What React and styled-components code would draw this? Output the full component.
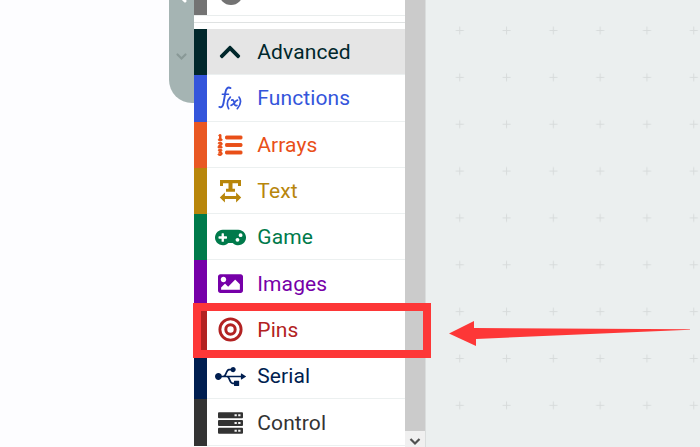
import React from 'react';
import styled, { createGlobalStyle } from 'styled-components';
import { FaChevronUp, FaListOl, FaGamepad, FaImage, FaUsb } from 'react-icons/fa';

const GlobalStyle = createGlobalStyle`
  html, body { margin: 0; overflow: hidden; }
  body { font-family: Roboto, sans-serif; }
`;

const Page = styled.main`
  position: relative;
  display: flex;
  width: 700px;
  height: 447px;
  overflow: hidden;
  background: #fdfdff;
`;

const Simulator = styled.aside`
  display: flex;
  justify-content: flex-end;
  flex: 0 0 193.5px;
`;

const CollapseTab = styled.div`
  display: flex;
  flex-direction: column;
  align-items: center;
  box-sizing: border-box;
  width: 25px;
  height: 103px;
  border-radius: 0 0 0 23px;
  background: #a5b4b3;
`;

const TabArrows = styled.svg`
  width: 25px;
  height: 66px;
`;

const Toolbox = styled.nav`
  display: flex;
  flex-direction: column;
  flex: 0 0 211.5px;
  background: #fff;
`;

const PreviousRow = styled.div`
  display: flex;
  box-sizing: border-box;
  height: 16px;
  border-bottom: 1px solid #e9eded;
`;

const PreviousSpine = styled.div`
  width: 13.5px;
  background: #737373;
`;

const PreviousIcon = styled.svg`
  width: 24px;
  height: 6px;
  margin-left: 11.5px;
`;

const Divider = styled.div`
  box-sizing: border-box;
  height: 13px;
  padding-top: 6px;
  &::before {
    content: '';
    display: block;
    height: 1px;
    background: #dfe2e2;
  }
`;

const Category = styled.div`
  display: flex;
  align-items: center;
  box-sizing: border-box;
  flex: 0 0 46.3px;
  padding-left: 8px;
  border-left: 13.5px solid ${({ $spine, $color }) => $spine || $color};
  color: ${({ $color }) => $color};
  background: ${({ $active }) => ($active ? '#e5e5e5' : '#fff')};
  box-shadow: inset 0 -1px #ecf0f0;
`;

const IconSlot = styled.span`
  display: flex;
  align-items: center;
  justify-content: center;
  width: 31px;
  height: 32px;
  margin-right: 11.8px;
`;

const Label = styled.span`
  font-size: 21px;
  line-height: 30px;
  letter-spacing: 0.1px;
`;

const BoldListIcon = styled(FaListOl)`
  overflow: visible;
  stroke: currentColor;
  stroke-width: 20px;
`;

const Scrollbar = styled.div`
  display: flex;
  align-items: flex-end;
  box-sizing: border-box;
  flex: 0 0 21px;
  border-right: 1px solid #dadddd;
  background: #cbcbcb;
`;

const ScrollButton = styled.div`
  display: flex;
  width: 20px;
  height: 16px;
  background: #f0f0f0;
`;

const Workspace = styled.svg`
  flex: 1;
  height: 447px;
  background: #ebefef;
`;

const Highlight = styled.div`
  position: absolute;
  left: 193px;
  top: 303px;
  box-sizing: border-box;
  width: 237.5px;
  height: 55px;
  border: 8px solid #fd3737;
`;

const Pointer = styled.svg`
  position: absolute;
  left: 446px;
  top: 318px;
`;

function FunctionIcon() {
  return (
    <svg width="26" height="28" viewBox="0 0 26 28" fill="none" stroke="currentColor" strokeLinecap="round">
      <path d="M13.500 4.100c-2.700-1.500-4.400.4-5 3.800L6.400 19.500c-.6 3.300-2.100 4.200-4.100 3.400" strokeWidth="1.900" />
      <path d="M5.300 10.300h6.200" strokeWidth="1.500" />
      <path d="M13.300 13.100c-3.300 3.400-3.600 7.800-1.700 11.600M22 13.100c2.600 3.600 1.400 8-1.700 11.600" strokeWidth="1.700" />
      <path d="M14.700 16.100c1.800-.8 2.200 1.100 2.600 3.200s1 2.900 2.600 2.100M20.500 16.200c-2.400.3-3.600 4.700-6.400 5.200" strokeWidth="1.700" />
    </svg>
  );
}

function TextWidthIcon() {
  return (
    <svg width="23" height="24" viewBox="0 0 23 24" fill="currentColor">
      <path d="M1 1h21v6h-3V4.200h-5.500v5.600H16v3H7v-3h2.500V4.200H4V7H1z" />
      <path d="m.8 18.500 5.100-4.900v3.300h11.200v-3.300l5.100 4.900-5.100 4.900v-3.300H5.900v3.300z" />
    </svg>
  );
}

function TargetIcon() {
  return (
    <svg width="25" height="25" viewBox="0 0 25 25" fill="none" stroke="currentColor">
      <circle cx="12.500" cy="12.500" r="10.600" strokeWidth="2.900" />
      <circle cx="12.500" cy="12.500" r="4.700" strokeWidth="3" />
    </svg>
  );
}

function ServerIcon() {
  return (
    <svg width="25" height="22" viewBox="0 0 25 22">
      <g fill="currentColor">
        <rect y="0.300" width="25" height="6" rx="1" />
        <rect y="8" width="25" height="6" rx="1" />
        <rect y="15.700" width="25" height="6" rx="1" />
      </g>
      <path d="M16.500 3.300h2.300m1.400 0h2.300M16.500 11h2.300m1.400 0h2.300M16.500 18.700h2.300m1.400 0h2.300" stroke="#f4f4f4" strokeWidth="1.900" />
    </svg>
  );
}

const categories = [
  { name: 'Advanced', color: '#00272b', icon: <FaChevronUp size={24} />, active: true },
  { name: 'Functions', color: '#3455db', icon: <FunctionIcon /> },
  { name: 'Arrays', color: '#e94f18', spine: '#e95823', icon: <BoldListIcon size={24} /> },
  { name: 'Text', color: '#b8860b', icon: <TextWidthIcon /> },
  { name: 'Game', color: '#007a4b', icon: <FaGamepad size={31} /> },
  { name: 'Images', color: '#7600a8', icon: <FaImage size={25} /> },
  { name: 'Pins', color: '#b22222', icon: <TargetIcon /> },
  { name: 'Serial', color: '#001e50', icon: <FaUsb size={31} /> },
  { name: 'Control', color: '#333333', icon: <ServerIcon /> },
];

export default function App() {
  return (
    <>
      <GlobalStyle />
      <Page>
        <Simulator>
          <CollapseTab>
            <TabArrows viewBox="0 0 25 66" fill="none" strokeLinecap="round">
              <path d="m12-3 4 4" stroke="#fff" strokeWidth="3" />
              <path d="m8.500 54.500 4 4 4-4" stroke="#899997" strokeWidth="2.200" />
            </TabArrows>
          </CollapseTab>
        </Simulator>
        <Toolbox>
          <PreviousRow>
            <PreviousSpine />
            <PreviousIcon viewBox="0 0 24 6"><circle cx="12" cy="-7" r="12" fill="#737373" /></PreviousIcon>
          </PreviousRow>
          <Divider />
          {categories.map(({ name, color, spine, icon, active }) => (
            <Category key={name} $color={color} $spine={spine} $active={active}>
              <IconSlot>{icon}</IconSlot>
              <Label>{name}</Label>
            </Category>
          ))}
        </Toolbox>
        <Scrollbar>
          <ScrollButton>
            <svg width="20" height="16" viewBox="0 0 20 16" fill="none">
              <path d="m5.500 8 4.500 4.500L14.500 8" stroke="#505050" strokeWidth="2.200" />
            </svg>
          </ScrollButton>
        </Scrollbar>
        <Workspace>
          <defs>
            <pattern id="grid" x="10.300" y="7.100" width="46.800" height="46.850" patternUnits="userSpaceOnUse">
              <path d="M19.500 23.400h8M23.500 19.400v8" stroke="#d7dbdb" strokeWidth="1" />
            </pattern>
          </defs>
          <rect width="100%" height="100%" fill="url(#grid)" />
        </Workspace>
        <Highlight />
        <Pointer width="246" height="30" viewBox="0 0 246 30">
          <path d="M3 15.500 28 3v7l216 1.200v.6L30 21v7Z" fill="#fd3737" />
        </Pointer>
      </Page>
    </>
  );
}
